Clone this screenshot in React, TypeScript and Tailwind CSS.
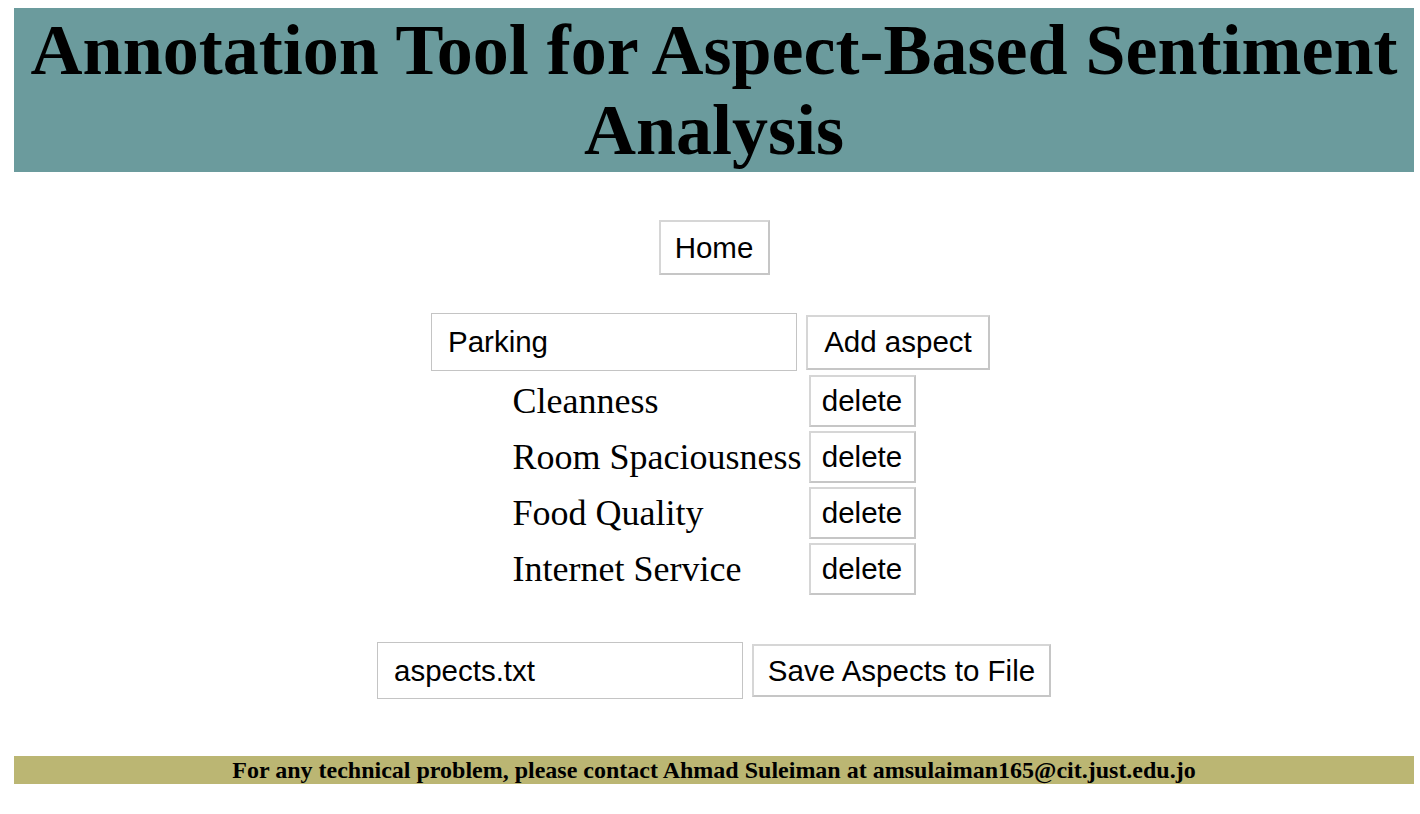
import React from "react";

const aspects = ["Cleanness", "Room Spaciousness", "Food Quality", "Internet Service"];

const btn =
  "bg-white border-2 border-[#d6d6d6] border-b-[#c6c6c6] border-r-[#c6c6c6] text-black font-['Liberation_Sans',Arial,sans-serif] text-[29.5px] leading-none flex items-center justify-center";

export default function App() {
  return (
    <div className="w-[1420px] min-h-[814px] bg-white pt-[8px] px-[14px] pr-[6px] font-['Liberation_Serif','Times_New_Roman',serif] text-black">
      <h1 className="bg-[#6b9b9d] h-[164px] text-center font-bold text-[72px] leading-[80px] flex flex-col justify-center">
        Annotation Tool for Aspect-Based Sentiment Analysis
      </h1>

      <div className="flex justify-center mt-[48px]">
        <button className={btn + " w-[111px] h-[55px]"}>Home</button>
      </div>

      <div className="flex justify-center items-center gap-[9px] mt-[38px] pr-[7px]">
        <input
          defaultValue="Parking"
          className="w-[366px] h-[58px] border border-[#c4c4c4] pl-[16px] text-[29.5px] font-['Liberation_Sans',Arial,sans-serif] outline-none"
        />
        <button className={btn + " w-[184px] h-[55px]"}>Add aspect</button>
      </div>

      <div className="flex justify-center mt-[4px]">
        <div className="grid grid-cols-[auto_auto] gap-x-[7px] gap-y-[4px] items-center">
          {aspects.map((a) => (
            <React.Fragment key={a}>
              <div className="text-[36px] leading-none whitespace-nowrap">{a}</div>
              <button className={btn + " w-[107px] h-[52px]"}>delete</button>
            </React.Fragment>
          ))}
        </div>
      </div>

      <div className="flex justify-center items-center gap-[9px] mt-[47px]">
        <input
          defaultValue="aspects.txt"
          className="w-[366px] h-[57px] border border-[#c4c4c4] pl-[16px] text-[29.5px] font-['Liberation_Sans',Arial,sans-serif] outline-none"
        />
        <button className={btn + " w-[299px] h-[53px]"}>Save Aspects to File</button>
      </div>

      <div className="mt-[57px] bg-[#bbb673] h-[28px] flex items-center justify-center font-bold text-[24px] leading-none">
        For any technical problem, please contact Ahmad Suleiman at amsulaiman165@cit.just.edu.jo
      </div>
    </div>
  );
}
